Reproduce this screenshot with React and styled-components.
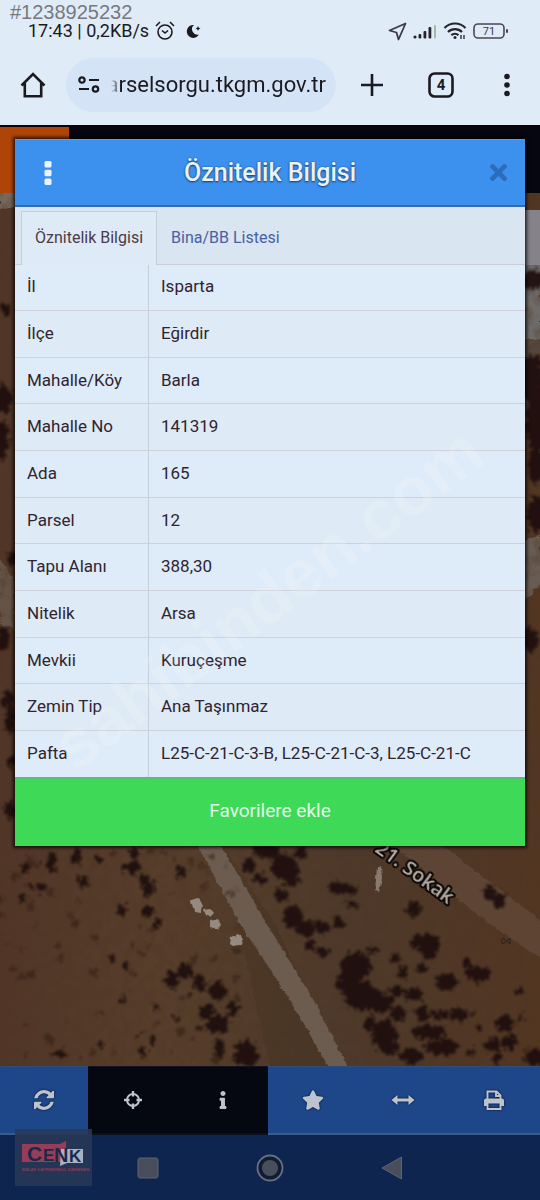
import React from "react";
import styled, { createGlobalStyle } from "styled-components";
import { FaInfo, FaStar, FaTimes } from "react-icons/fa";

const GlobalStyle = createGlobalStyle`
  *, *::before, *::after { box-sizing: border-box; }
  body { margin: 0; background: #0d254d; font-family: Roboto, "Liberation Sans", sans-serif; }
  button, input { font: inherit; color: inherit; border: 0; padding: 0; background: none; }
  button { cursor: pointer; }
  svg { display: block; flex: none; }
`;

const Page = styled.div`
  display: flex;
  flex-direction: column;
  min-height: 100vh;
`;

/* ---------- browser chrome ---------- */

const BrowserHeader = styled.header`
  position: relative;
  background: #e0ebf8;
  height: 125px;
  padding-top: 20px;
  color: #1b1a20;
`;

const AdNumber = styled.span`
  position: absolute;
  left: 10px;
  top: 0;
  font: 20px/24px "Liberation Sans", sans-serif;
  color: #77797f;
`;

const StatusBar = styled.div`
  display: flex;
  align-items: center;
  justify-content: space-between;
  height: 22px;
  padding: 0 31px 0 28px;
  font-size: 18px;
  line-height: 22px;
`;

const StatusGroup = styled.div`
  display: flex;
  align-items: center;
  gap: ${(p) => p.$gap}px;
`;

const AddressRow = styled.div`
  display: flex;
  align-items: center;
  height: 54px;
  margin-top: 16px;
  padding: 0 4px 0 18px;
`;

const ChromeButton = styled.button`
  display: flex;
  align-items: center;
  justify-content: center;
  width: ${(p) => p.$width}px;
  height: 44px;
`;

const AddressPill = styled.label`
  display: flex;
  align-items: center;
  flex: 1;
  min-width: 0;
  height: 54px;
  margin: 0 4px 0 18px;
  padding: 0 10px 0 12px;
  border-radius: 27px;
  background: #d4e4f6;
`;

const AddressInput = styled.input`
  flex: 1;
  min-width: 0;
  margin-left: 11px;
  font-size: 22px;
  line-height: 32px;
  direction: rtl;
  outline: 0;
  mask-image: linear-gradient(to right, transparent, #000 10px);
`;

/* ---------- map stage ---------- */

const Stage = styled.main`
  position: relative;
  flex: 1;
  display: grid;
  grid-template-columns: minmax(0, 1fr);
  align-items: start;
  isolation: isolate;
`;

const MapLayer = styled.svg`
  position: absolute;
  inset: 0;
  width: 100%;
  height: 100%;
  z-index: -1;
`;

const SiteBar = styled.div`
  grid-area: 1 / 1;
  height: 68px;
  background: linear-gradient(to right, #ae4408 69px, #05060f 69px);
  border-top: 2px solid #08040a;
`;

const Dialog = styled.section`
  grid-area: 1 / 1;
  position: relative;
  margin: 14px 15px 20px;
  background: #deeaf7;
  box-shadow: 0 0 3px 2px rgba(0, 0, 0, 0.7);
`;

const DialogHeader = styled.header`
  display: grid;
  grid-template-columns: 50px 1fr 50px;
  align-items: center;
  height: 68px;
  padding: 0 8px;
  background: #3d91ee;
  border-top: 1px solid #5a9fe4;
  border-bottom: 2px solid #326cad;
`;

const HeaderButton = styled.button`
  display: flex;
  align-items: center;
  justify-content: center;
  justify-self: ${(p) => p.$align};
  width: ${(p) => (p.$align === "end" ? 38 : 50)}px;
  height: 40px;
  color: ${(p) => p.$color};
`;

const DialogTitle = styled.h1`
  margin: 0;
  text-align: center;
  font-size: 25px;
  line-height: 32px;
  font-weight: 500;
  color: #e9f3fd;
  text-shadow: 0 1px 2px #173f70, 0 0 2px #28578e;
`;

const TabStrip = styled.div`
  display: flex;
  align-items: flex-end;
  height: 58px;
  padding: 4px 6px 0;
  background: #d9e5f0;
  border-bottom: 1px solid #c9ced7;
`;

const Tab = styled.button`
  height: 54px;
  padding: 0 13px 2px;
  margin-bottom: -1px;
  border: 1px solid ${(p) => (p.$active ? "#c7ced8" : "transparent")};
  border-bottom: 0;
  background: ${(p) => (p.$active ? "#dfeaf7" : "transparent")};
  color: ${(p) => (p.$active ? "#4b3a48" : "#4661a5")};
  font-size: 16px;
  line-height: 24px;
  white-space: nowrap;
`;

const Details = styled.table`
  width: 100%;
  height: 512px;
  border-collapse: separate;
  border-spacing: 0;
  font-size: 17px;
  line-height: 24px;
  color: #302430;
`;

const DetailRow = styled.tr`
  background: #deeaf5;
  &:nth-child(odd) { background: #deebf9; }
  & + & > * { border-top: 1px solid #ced1da; }
`;

const DetailLabel = styled.th`
  width: 134px;
  padding: 0 12px 2px;
  border-right: 1px solid #c8ced9;
  font-weight: 400;
  text-align: left;
`;

const DetailValue = styled.td`
  padding: 0 12px 2px;
`;

const FavouriteButton = styled.button`
  display: block;
  width: 100%;
  height: 69px;
  padding-bottom: 4px;
  background: #3dd957;
  border-top: 2px solid #57bd78;
  color: #e4f9e8;
  font-size: 19px;
  line-height: 24px;
`;

const DialogMark = styled.svg`
  position: absolute;
  inset: 0;
  width: 100%;
  height: 100%;
  pointer-events: none;
`;

/* ---------- bottom bars ---------- */

const Toolbar = styled.nav`
  display: grid;
  grid-template-columns: 88fr repeat(4, 90fr) 92fr;
  height: 69px;
  background: #1e478a;
`;

const ToolButton = styled.button`
  display: flex;
  align-items: center;
  justify-content: center;
  background: ${(p) => (p.$dark ? "#050711" : "#1e478a")};
  border-top: 1px solid ${(p) => (p.$dark ? "#111521" : "#2e4d7c")};
  border-bottom: 2px solid ${(p) => (p.$dark ? "#0b1020" : "#3b5b8c")};
  color: #bdc3cf;

  & > svg { filter: drop-shadow(0 0 1px rgba(0, 0, 0, 0.8)); }
`;

const SystemBar = styled.footer`
  position: relative;
  display: flex;
  justify-content: center;
  height: 65px;
  background: #0d254f;
`;

const SystemButton = styled.button`
  display: flex;
  align-items: center;
  justify-content: center;
  width: 122px;
`;

const AgencyLogo = styled.div`
  position: absolute;
  left: 15px;
  top: -6px;
  width: 77px;
  height: 57px;
  background: rgba(40, 55, 86, 0.9);
`;

/* ---------- data ---------- */

const details = [
  ["İl", "Isparta"],
  ["İlçe", "Eğirdir"],
  ["Mahalle/Köy", "Barla"],
  ["Mahalle No", "141319"],
  ["Ada", "165"],
  ["Parsel", "12"],
  ["Tapu Alanı", "388,30"],
  ["Nitelik", "Arsa"],
  ["Mevkii", "Kuruçeşme"],
  ["Zemin Tip", "Ana Taşınmaz"],
  ["Pafta", "L25-C-21-C-3-B, L25-C-21-C-3, L25-C-21-C"],
];

/* Bushes on the aerial view: centre x, centre y, radius x, radius y */
const bushes = [
  [52, 859, 5, 6], [77, 857, 5, 6], [99, 861, 4, 4], [26, 870, 4, 4], [51, 867, 4, 6],
  [30, 885, 3, 3], [40, 889, 5, 5], [84, 882, 5, 6], [22, 900, 3, 4], [135, 854, 4, 8],
  [132, 869, 9, 6], [143, 879, 4, 4], [148, 889, 7, 9], [122, 910, 5, 6], [148, 912, 6, 5],
  [157, 925, 5, 5], [181, 873, 6, 6], [125, 966, 4, 4], [112, 960, 3, 4], [123, 1000, 3, 5],
  [172, 981, 7, 9], [185, 972, 7, 8], [199, 984, 6, 9], [217, 992, 9, 9], [233, 1010, 6, 7],
  [206, 1013, 8, 8], [218, 1025, 11, 10], [219, 1050, 5, 10], [246, 1055, 12, 13],
  [154, 1041, 4, 3], [138, 1037, 3, 2], [101, 1045, 3, 3], [59, 1055, 6, 4], [142, 1054, 5, 4],
  [177, 1020, 3, 3], [156, 1008, 3, 4], [190, 996, 3, 3], [200, 1028, 3, 3],
  [249, 866, 7, 7], [260, 880, 6, 5], [266, 852, 14, 7], [284, 868, 13, 13], [291, 879, 9, 9],
  [301, 853, 6, 7], [281, 896, 7, 7], [293, 918, 10, 11], [305, 929, 10, 9], [322, 928, 8, 6],
  [339, 923, 6, 5], [311, 946, 5, 6], [323, 953, 6, 5], [338, 889, 9, 6], [349, 891, 8, 5],
  [352, 905, 6, 3], [413, 910, 7, 7], [425, 944, 15, 9], [429, 953, 8, 8], [372, 951, 6, 4],
  [395, 959, 5, 4], [403, 973, 5, 6], [422, 970, 6, 4], [356, 967, 15, 14], [350, 985, 13, 12],
  [362, 997, 17, 14], [379, 1003, 15, 10], [397, 992, 8, 5], [414, 996, 9, 7], [398, 1015, 8, 7],
  [422, 1014, 7, 7], [440, 1016, 10, 5], [459, 1016, 8, 7], [447, 983, 11, 8], [478, 975, 13, 8],
  [489, 894, 6, 7], [499, 901, 7, 8], [467, 964, 5, 4], [505, 1025, 9, 8], [492, 1046, 8, 7],
  [509, 1043, 7, 8], [429, 1033, 17, 7], [442, 1048, 17, 8], [385, 1036, 12, 15], [370, 1025, 6, 8],
  [391, 1050, 8, 6], [411, 1057, 12, 8], [479, 1030, 3, 4], [472, 1014, 3, 3], [497, 1059, 5, 4],
  [535, 1058, 10, 9], [518, 993, 4, 3], [521, 1018, 3, 3], [471, 1053, 4, 3],
  [4, 400, 8, 14], [2, 440, 7, 20], [12, 560, 5, 8], [3, 640, 6, 12], [8, 700, 6, 9],
  [12, 762, 4, 6], [10, 720, 5, 14], [7, 310, 5, 6], [10, 812, 6, 9],
  [534, 280, 12, 10], [532, 380, 12, 25], [537, 420, 12, 30], [536, 515, 9, 18], [530, 640, 8, 12],
  [536, 465, 8, 20],
];

/* Small patches of darker soil */
let seed = 17;
const random = () => {
  seed = (seed * 16807) % 2147483647;
  return seed / 2147483647;
};
const specks = Array.from({ length: 90 }, () => [
  Math.round(random() * 240),
  Math.round(850 + random() * 212),
  Math.round(1 + random() * 3),
]);

const REFRESH =
  "M1511 1056q0 5-1 7-64 268-268 434.5t-478 166.5q-146 0-282.5-55t-243.5-157l-129 129q-19 19-45 19t-45-19-19-45v-448q0-26 19-45t45-19h448q26 0 45 19t19 45-19 45l-137 137q71 66 161 102t187 36q134 0 250-65t186-179q11-17 53-117 8-23 30-23h192q13 0 22.5 9.5t9.5 22.5zm25-800v448q0 26-19 45t-45 19h-448q-26 0-45-19t-19-45 19-45l138-138q-148-137-349-137-134 0-250 65t-186 179q-11 17-53 117-8 23-30 23h-199q-13 0-22.5-9.5t-9.5-22.5v-7q65-268 270-434.5t480-166.5q146 0 284 55.5t245 156.5l130-129q19-19 45-19t45 19 19 45z";

function AerialMap() {
  return (
    <MapLayer viewBox="0 125 540 942" preserveAspectRatio="xMidYMax slice" aria-hidden="true">
      <defs>
        <linearGradient id="soil" x1="0" y1="0" x2="1" y2="0">
          <stop offset="0" stopColor="#513627" />
          <stop offset="0.3" stopColor="#573e2b" />
          <stop offset="0.65" stopColor="#4e392a" />
          <stop offset="1" stopColor="#523622" />
        </linearGradient>
        <filter id="grain" x="0" y="0" width="1" height="1">
          <feTurbulence type="fractalNoise" baseFrequency="0.09" numOctaves="4" seed="4" />
          <feColorMatrix values="0 0 0 0 0.08  0 0 0 0 0.04  0 0 0 0 0.02  2.4 0 0 0 -1.05" />
        </filter>
        <filter id="ragged" x="-0.1" y="-0.1" width="1.2" height="1.2">
          <feTurbulence type="fractalNoise" baseFrequency="0.2" numOctaves="3" seed="8" result="n" />
          <feDisplacementMap in="SourceGraphic" in2="n" scale="13" xChannelSelector="R" yChannelSelector="G" result="d" />
          <feGaussianBlur in="d" stdDeviation="1" />
        </filter>
        <filter id="edge">
          <feTurbulence type="fractalNoise" baseFrequency="0.15" numOctaves="2" seed="2" result="n" />
          <feDisplacementMap in="SourceGraphic" in2="n" scale="4" xChannelSelector="R" yChannelSelector="G" result="d" />
          <feGaussianBlur in="d" stdDeviation="0.7" />
        </filter>
      </defs>
      <rect y="125" width="540" height="942" fill="url(#soil)" />
      <g filter="url(#edge)">
        <path d="M0 193h18v14l-18 4z" fill="#75685f" />
        <path d="M0 560l14 20v50l-14-5z" fill="#665247" />
        <path d="M520 260h20v106l-20 10z" fill="#6d6a67" />
        <path d="M520 340h20v40l-20 60z" fill="#57473e" />
        <path d="M520 544l20-8v50l-20 20z" fill="#695c53" />
        <path d="M222 846L270 917 345 1067 270 1067 240 935z" fill="#41301f" opacity="0.3" />
      </g>
      <rect y="125" width="540" height="942" filter="url(#grain)" opacity="0.45" />
      <g filter="url(#edge)">
        <path d="M380 836L425 832 470 868 552 930 552 968 480 918 420 868z" fill="#614b3a" opacity="0.75" />
        <path d="M194 840L216 838 270 930 313 1000 350 1072 330 1072 303 1023 270 970 243 930z" fill="#6c5c50" />
      </g>
      <path d="M520 211h20v55h-20z" fill="#858389" />
      <g fill="#29160f" opacity="0.45" filter="url(#ragged)">
        {specks.map(([x, y, r], i) => (
          <circle key={i} cx={x} cy={y} r={r} />
        ))}
      </g>
      <g fill="#1d110b" opacity="0.9" filter="url(#ragged)">
        {bushes.map(([x, y, rx, ry], i) => (
          <ellipse key={i} cx={x} cy={y} rx={rx} ry={ry} />
        ))}
      </g>
      <g fill="#968a80" filter="url(#edge)">
        <path d="M191 901l8-2 4 8-2 7-7-1z" />
        <path d="M204 910l6-1 4 5-4 4-5-2z" />
        <path d="M210 922l8-2 3 6-4 4-7-2z" />
        <path d="M231 938l7-3 5 5-3 6-7 1-3-2z" />
        <path d="M377 869l4-2 1 12-3 14-4-1z" opacity="0.8" />
      </g>
      <g fill="none" stroke="#2b211c" strokeWidth="1">
        <path d="M503 939l7 6m-7 0l7-6m-8 0v6m8-6v6" />
      </g>
      <text
        transform="translate(374 852) rotate(36)"
        fontFamily="Open Sans, sans-serif"
        fontSize="20"
        fontWeight="600"
        fill="#b5aca4"
        stroke="#0b0806"
        strokeWidth="4"
        strokeLinejoin="round"
        paintOrder="stroke"
      >
        21. Sokak
      </text>
    </MapLayer>
  );
}

export default function App() {
  return (
    <>
      <GlobalStyle />
      <Page>
        <BrowserHeader>
          <AdNumber>#1238925232</AdNumber>
          <StatusBar>
            <StatusGroup $gap={6}>
              <span>17:43 | 0,2KB/s</span>
              <svg width="20" height="20" viewBox="0 0 20 20" fill="none" stroke="currentColor" strokeWidth="1.6">
                <circle cx="10" cy="11" r="7" />
                <path d="M1 5l4-4M19 5l-4-4M7 9.500l3 2.500 3-2.500" />
              </svg>
              <svg width="24" height="18" viewBox="0 0 24 18" fill="currentColor">
                <path d="M13 3a6.500 6.500 0 1 0 5 9.500A5.500 5.500 0 0 1 13 3z" />
                <path d="M17 4l.8 1.700 1.700.8-1.700.8L17 9l-.8-1.700-1.700-.8 1.700-.8z" />
              </svg>
            </StatusGroup>
            <StatusGroup $gap={6}>
              <svg width="19" height="19" viewBox="0 0 19 19" fill="none" stroke="#3c3a42" strokeWidth="1.8" strokeLinejoin="round">
                <path d="M17.500 1.500L1.500 8.500l7 2 2 7z" />
              </svg>
              <svg width="24" height="15" viewBox="0 0 24 15" fill="#26242b">
                <circle cx="2" cy="13" r="1.600" />
                <rect x="5.500" y="10" width="2.800" height="4.500" rx="1" />
                <rect x="10.500" y="7" width="2.800" height="7.500" rx="1" />
                <rect x="15.500" y="3" width="2.800" height="11.500" rx="1" />
                <rect x="21" y="1" width="2" height="13.500" rx="1" fill="#a9b7aa" />
              </svg>
              <svg width="24" height="18" viewBox="0 0 24 18" fill="none" stroke="#26242b" strokeWidth="2.200">
                <path d="M1.500 6a14.500 14.500 0 0 1 21 0M5 10a9.800 9.800 0 0 1 14 0M8.300 13.200a5.200 5.200 0 0 1 7.200 0" />
                <circle cx="12" cy="15.500" r="1.500" fill="#26242b" stroke="none" />
                <path d="M18 13v4M21 13v4" strokeWidth="1.300" />
              </svg>
              <svg width="36" height="17" viewBox="0 0 36 17">
                <rect x="1" y="1" width="30" height="14" rx="4" fill="none" stroke="#4b474f" strokeWidth="1.600" />
                <rect x="33" y="6" width="2" height="4" rx="1" fill="#4b474f" />
                <text x="16" y="12" textAnchor="middle" fontFamily="Roboto, sans-serif" fontSize="11" fill="#3c3a42">71</text>
              </svg>
            </StatusGroup>
          </StatusBar>
          <AddressRow>
            <ChromeButton $width={30} aria-label="Ana sayfa">
              <svg width="26" height="26" viewBox="0 0 26 26" fill="none" stroke="currentColor" strokeWidth="2.600">
                <path d="M1.500 13.500L13 2l11.500 11.500M4.800 11v13.200h16.400V11" />
              </svg>
            </ChromeButton>
            <AddressPill>
              <svg width="22" height="18" viewBox="0 0 22 18" fill="none" stroke="currentColor" strokeWidth="2.200">
                <circle cx="4" cy="4" r="2.700" />
                <circle cx="17.500" cy="13" r="2.700" />
                <path d="M11 4h10M1 13h10" />
              </svg>
              <AddressInput aria-label="Adres" defaultValue="arselsorgu.tkgm.gov.tr" />
            </AddressPill>
            <ChromeButton $width={64} aria-label="Yeni sekme">
              <svg width="22" height="22" viewBox="0 0 22 22" stroke="currentColor" strokeWidth="2.600">
                <path d="M11 0v22M0 11h22" />
              </svg>
            </ChromeButton>
            <ChromeButton $width={74} aria-label="Sekmeler">
              <svg width="26" height="26" viewBox="0 0 26 26">
                <rect x="1.500" y="1.500" width="23" height="23" rx="5" fill="none" stroke="currentColor" strokeWidth="2.600" />
                <text x="13" y="18" textAnchor="middle" fontFamily="Roboto, sans-serif" fontWeight="700" fontSize="15" fill="currentColor">4</text>
              </svg>
            </ChromeButton>
            <ChromeButton $width={58} aria-label="Menü">
              <svg width="6" height="24" viewBox="0 0 6 24" fill="currentColor">
                <circle cx="3" cy="3.500" r="2.800" />
                <circle cx="3" cy="12" r="2.800" />
                <circle cx="3" cy="20.500" r="2.800" />
              </svg>
            </ChromeButton>
          </AddressRow>
        </BrowserHeader>

        <Stage>
          <AerialMap />
          <SiteBar />
          <Dialog aria-labelledby="dialog-title">
            <DialogHeader>
              <HeaderButton $align="start" $color="#e9f3fd" aria-label="Seçenekler">
                <svg width="8" height="24" viewBox="0 0 8 24" fill="currentColor">
                  <rect x="0.500" width="7" height="6.500" rx="1.500" />
                  <rect x="0.500" y="8.700" width="7" height="6.500" rx="1.500" />
                  <rect x="0.500" y="17.400" width="7" height="6.500" rx="1.500" />
                </svg>
              </HeaderButton>
              <DialogTitle id="dialog-title">Öznitelik Bilgisi</DialogTitle>
              <HeaderButton $align="end" $color="#2c6cb8" aria-label="Kapat">
                <FaTimes size={25} />
              </HeaderButton>
            </DialogHeader>
            <TabStrip role="tablist">
              <Tab role="tab" aria-selected="true" $active>Öznitelik Bilgisi</Tab>
              <Tab role="tab" aria-selected="false">Bina/BB Listesi</Tab>
            </TabStrip>
            <Details>
              <tbody>
                {details.map(([label, value]) => (
                  <DetailRow key={label}>
                    <DetailLabel scope="row">{label}</DetailLabel>
                    <DetailValue>{value}</DetailValue>
                  </DetailRow>
                ))}
              </tbody>
            </Details>
            <FavouriteButton>Favorilere ekle</FavouriteButton>
            <DialogMark viewBox="0 0 510 707" aria-hidden="true">
              <text
                transform="translate(60 634) rotate(-37)"
                fontFamily="Liberation Sans, sans-serif"
                fontWeight="700"
                fontSize="68"
                fill="#ffffff"
                opacity="0.15"
              >
                sahibinden.com
              </text>
            </DialogMark>
          </Dialog>
        </Stage>

        <Toolbar>
          <ToolButton aria-label="Yenile">
            <svg width="20" height="20" viewBox="0 128 1536 1536" fill="currentColor"><path d={REFRESH} /></svg>
          </ToolButton>
          <ToolButton $dark aria-label="Konum">
            <svg width="20" height="20" viewBox="0 0 20 20" fill="none" stroke="currentColor" strokeWidth="2">
              <circle cx="10" cy="10" r="6" />
              <path d="M10 1v5.500M10 13.500V19M1 10h5.500M13.500 10H19" strokeWidth="2.400" />
            </svg>
          </ToolButton>
          <ToolButton $dark aria-label="Bilgi"><FaInfo size={18} /></ToolButton>
          <ToolButton aria-label="Favoriler"><FaStar size={22} /></ToolButton>
          <ToolButton aria-label="Ölçüm">
            <svg width="24" height="12" viewBox="0 0 24 12" fill="currentColor">
              <path d="M6.500 1v3.500h11V1L23.500 6l-6 5V7.500h-11V11L.5 6z" />
            </svg>
          </ToolButton>
          <ToolButton aria-label="Yazdır">
            <svg width="22" height="20" viewBox="0 0 22 20">
              <path d="M4.500 9V1.500h9l4 4V9M13 1.500V6h4.500" fill="none" stroke="currentColor" strokeWidth="1.900" />
              <path d="M3 8.500h16a2 2 0 0 1 2 2V16h-3v-2.500H4V16H1v-5.500a2 2 0 0 1 2-2z" fill="currentColor" />
              <path d="M4.500 13v6h13v-6" fill="none" stroke="currentColor" strokeWidth="1.900" />
            </svg>
          </ToolButton>
        </Toolbar>
        <SystemBar>
          <SystemButton aria-label="Son uygulamalar">
            <svg width="22" height="22" viewBox="0 0 22 22">
              <rect x="1" y="1" width="20" height="20" rx="2" fill="#484e5c" stroke="#5a6370" />
            </svg>
          </SystemButton>
          <SystemButton aria-label="Ana ekran">
            <svg width="28" height="28" viewBox="0 0 28 28">
              <circle cx="14" cy="14" r="12.500" fill="#101c33" stroke="#667080" strokeWidth="1.800" />
              <circle cx="14" cy="14" r="8" fill="#484e5c" />
            </svg>
          </SystemButton>
          <SystemButton aria-label="Geri">
            <svg width="22" height="24" viewBox="0 0 22 24">
              <path d="M1 12L20.500 1v22z" fill="#484e5c" stroke="#5a6370" />
            </svg>
          </SystemButton>
          <AgencyLogo>
            <svg width="77" height="57" viewBox="0 0 77 57" role="img" aria-label="CENK">
              <path d="M7 15h38l6-3v22l-6-1H7z" fill="#963e57" />
              <path d="M46 20h22v14H52l-7 3z" fill="#aab1c2" />
              <g fontFamily="Liberation Sans, sans-serif" fontWeight="700" fill="#1a294b">
                <text x="12" y="32" fontSize="21">C</text>
                <text x="28" y="32" fontSize="17">E</text>
                <text x="39" y="33" fontSize="20">N</text>
                <text x="54" y="33" fontSize="17">K</text>
              </g>
              <text x="7" y="42" fontFamily="Liberation Sans, sans-serif" fontWeight="700" fontSize="4" fill="#873f58">
                EMLAK GAYRİMENKUL DANIŞMAN
              </text>
            </svg>
          </AgencyLogo>
        </SystemBar>
      </Page>
    </>
  );
}
